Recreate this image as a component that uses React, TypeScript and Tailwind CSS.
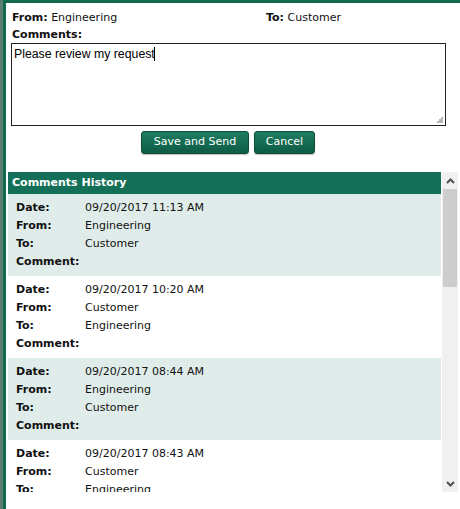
import React from "react";

const history = [
  { date: "09/20/2017 11:13 AM", from: "Engineering", to: "Customer" },
  { date: "09/20/2017 10:20 AM", from: "Customer", to: "Engineering" },
  { date: "09/20/2017 08:44 AM", from: "Engineering", to: "Customer" },
  { date: "09/20/2017 08:43 AM", from: "Customer", to: "Engineering" },
  { date: "09/20/2017 08:40 AM", from: "Engineering", to: "Customer" },
];

const font = { fontFamily: '"DejaVu Sans", Verdana, sans-serif' };

export default function App() {
  return (
    <div className="flex w-[460px] h-[509px] bg-white overflow-hidden" style={font}>
      <div className="w-[3px] bg-[#5b7d70]" />
      <div className="flex-1 flex flex-col border-l-[3px] border-t-[3px] border-[#13694f] bg-white text-[11px] text-[#111]">
        <div className="flex pl-[6px] pt-[6px] leading-[17px]">
          <div className="w-[254px]">
            <span className="font-bold">From:</span> Engineering
          </div>
          <div>
            <span className="font-bold">To:</span> Customer
          </div>
        </div>
        <div className="pl-[6px] leading-[17px] font-bold">Comments:</div>
        <div className="pl-[5px]">
          <div className="relative w-[435px] h-[83px]">
            <textarea
              defaultValue="Please review my request"
              className="block w-full h-full resize-none border border-[#222] px-[2px] py-[2px] text-[12.3px] leading-[16px] text-black outline-none"
              style={{ fontFamily: '"Liberation Sans", Arial, sans-serif' }}
            />
            <div className="absolute left-[143px] top-[4px] w-[1px] h-[14px] bg-black" />
            <svg className="absolute right-[3px] bottom-[3px]" width="7" height="7" viewBox="0 0 7 7">
              <rect x="5" y="1" width="2" height="2" fill="#b5b5b5" />
              <rect x="3" y="3" width="2" height="2" fill="#b5b5b5" />
              <rect x="5" y="3" width="2" height="2" fill="#b5b5b5" />
              <rect x="1" y="5" width="2" height="2" fill="#b5b5b5" />
              <rect x="3" y="5" width="2" height="2" fill="#b5b5b5" />
              <rect x="5" y="5" width="2" height="2" fill="#b5b5b5" />
            </svg>
          </div>
        </div>
        <div className="flex gap-[5px] mt-[5px] pl-[135px]">
          <button className="h-[23px] w-[108px] rounded-[3px] border border-[#0b4d3a] bg-gradient-to-b from-[#1d7d60] to-[#0e5c45] text-white text-[11px] shadow-[0_1px_1px_rgba(0,0,0,0.25)]">
            Save and Send
          </button>
          <button className="h-[23px] w-[61px] rounded-[3px] border border-[#0b4d3a] bg-gradient-to-b from-[#1d7d60] to-[#0e5c45] text-white text-[11px] shadow-[0_1px_1px_rgba(0,0,0,0.25)]">
            Cancel
          </button>
        </div>
        <div className="flex mt-[18px] ml-[2px] h-[320px]">
          <div className="w-[433px] h-full overflow-hidden">
            <div className="h-[22px] bg-[#136f57] text-white font-bold pl-[4px] leading-[22px]">
              Comments History
            </div>
            {history.map((h, i) => (
              <div
                key={i}
                className={`grid grid-cols-[69px_1fr] pl-[8px] py-[5px] leading-[18px] ${i % 2 === 0 ? "bg-[#e0ece9]" : "bg-white"}`}
              >
                <div className="font-bold">Date:</div>
                <div>{h.date}</div>
                <div className="font-bold">From:</div>
                <div>{h.from}</div>
                <div className="font-bold">To:</div>
                <div>{h.to}</div>
                <div className="font-bold">Comment:</div>
                <div></div>
              </div>
            ))}
          </div>
          <div className="ml-[1px] w-[16px] h-full bg-[#f0f0f0] flex flex-col">
            <div className="h-[17px] flex items-center justify-center">
              <svg width="9" height="6" viewBox="0 0 9 6">
                <polyline points="1,5 4.5,1.5 8,5" fill="none" stroke="#505050" strokeWidth="2" />
              </svg>
            </div>
            <div className="h-[98px] bg-[#cdcdcd] mx-[1px]" />
            <div className="flex-1" />
            <div className="h-[17px] flex items-center justify-center">
              <svg width="9" height="6" viewBox="0 0 9 6">
                <polyline points="1,1 4.5,4.5 8,1" fill="none" stroke="#505050" strokeWidth="2" />
              </svg>
            </div>
          </div>
        </div>
      </div>
    </div>
  );
}
